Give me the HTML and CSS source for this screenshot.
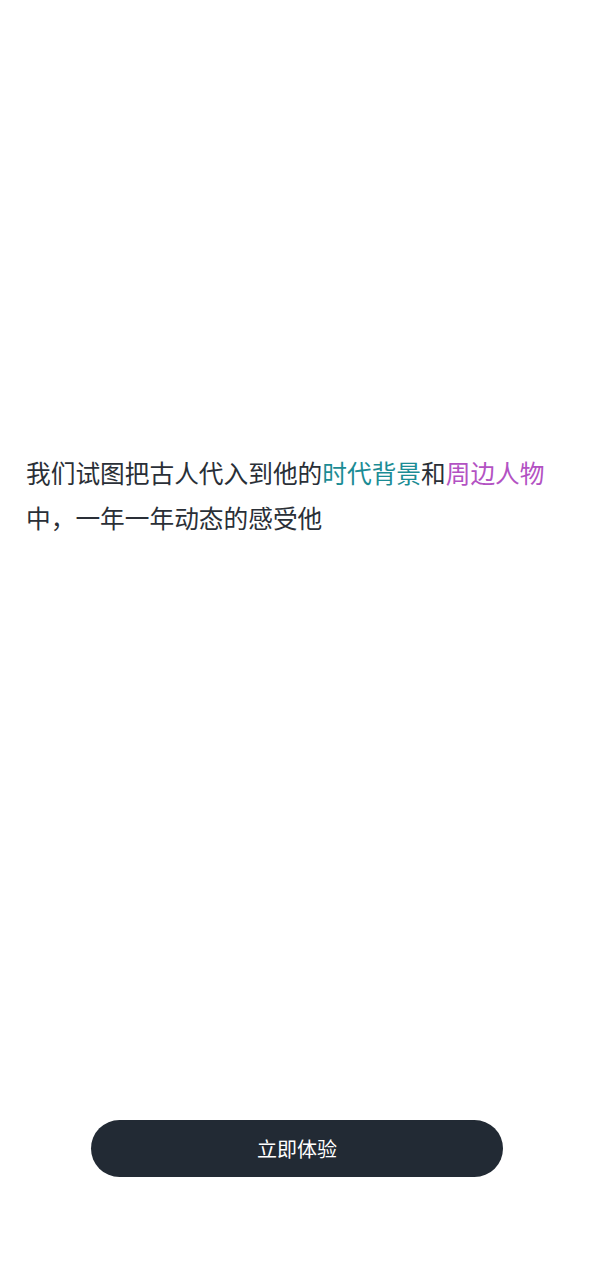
FILE: index.html
```html
<!DOCTYPE html>
<html lang="zh">
<head>
<meta charset="utf-8">
<link rel="stylesheet" href="styles.css">
</head>
<body>
<div class="page">
  <p class="intro">我们试图把古人代入到他的<span class="teal">时代背景</span>和<span class="purple">周边人物</span>中，一年一年动态的感受他</p>
  <div class="spacer"></div>
  <button class="cta">立即体验</button>
</div>
</body>
</html>
```
FILE: styles.css
```css
html, body {
  margin: 0;
  padding: 0;
  background: #ffffff;
}
.page {
  height: 1280px;
  display: flex;
  flex-direction: column;
  align-items: center;
  box-sizing: border-box;
  padding: 450px 0 103px;
  font-family: "Noto Sans CJK SC", "Noto Sans", sans-serif;
}
.intro {
  margin: 0;
  align-self: stretch;
  padding: 0 26px;
  font-size: 24.7px;
  line-height: 45px;
  color: #2a2f37;
}
.teal { color: #1b8c95; }
.purple { color: #b352c3; }
.spacer { flex: 1; }
.cta {
  width: 412px;
  height: 57px;
  border: none;
  border-radius: 29px;
  background: #222a34;
  color: #ffffff;
  font-family: "Noto Sans CJK SC", "Noto Sans", sans-serif;
  font-size: 20px;
  padding: 0;
}
```
